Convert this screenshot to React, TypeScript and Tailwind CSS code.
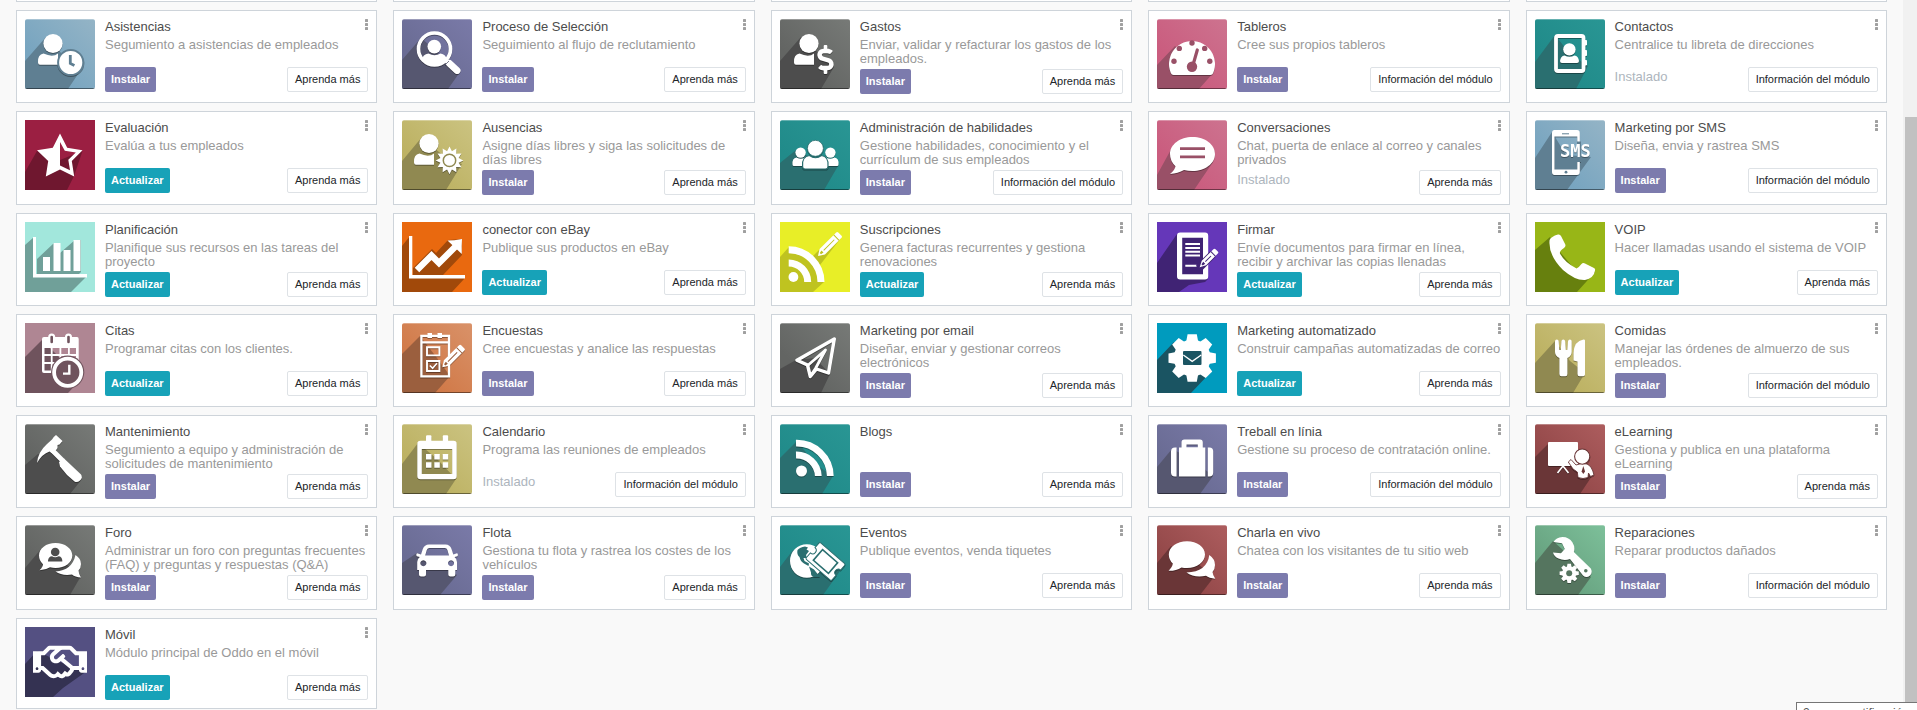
import type { ReactNode } from "react";
import { FaDollarSign, FaRegHandshake } from "react-icons/fa";

type Tone = { from: string; to: string; shade: string; flat?: boolean };

const TONES = {
  sky: { from: "#78a5c0", to: "#94b4c6", shade: "#5f7f92" },
  violet: { from: "#6a6c94", to: "#7a7aa8", shade: "#565770" },
  gray: { from: "#636563", to: "#777a77", shade: "#4d4d4d" },
  pink: { from: "#ca5d7f", to: "#cd738f", shade: "#995067" },
  teal: { from: "#218b8a", to: "#299694", shade: "#2a6f70" },
  sand: { from: "#bdb263", to: "#cbc381", shade: "#908951" },
  orange: { from: "#d17a49", to: "#d99269", shade: "#9b5f3e" },
  brick: { from: "#934849", to: "#ad5d5e", shade: "#6a3637" },
  green: { from: "#68a381", to: "#7dc09a", shade: "#55755f" },
  crimson: { from: "#9b1f42", to: "#9b1f42", shade: "#6f172f", flat: true },
  mint: { from: "#a2e7dc", to: "#a2e7dc", shade: "#70a099", flat: true },
  ebay: { from: "#e9690f", to: "#e9690f", shade: "#a1490a", flat: true },
  lemon: { from: "#e8ee27", to: "#e8ee27", shade: "#bfc320", flat: true },
  purple: { from: "#6537b9", to: "#6537b9", shade: "#402374", flat: true },
  lime: { from: "#98b617", to: "#98b617", shade: "#67800e", flat: true },
  mauve: { from: "#af8693", to: "#af8693", shade: "#6f535d", flat: true },
  cyan: { from: "#009bbe", to: "#009bbe", shade: "#1a5462", flat: true },
  indigo: { from: "#545082", to: "#545082", shade: "#343252", flat: true },
} satisfies Record<string, Tone>;

type Art = { tone: keyof typeof TONES; shadow: string; draw: (shade: string) => ReactNode };

/* Points of a star polygon: n spikes alternating between two radii. */
const spikes = (cx: number, cy: number, n: number, outer: number, inner: number) =>
  Array.from({ length: n * 2 }, (_, i) => {
    const r = i % 2 ? inner : outer;
    const a = (Math.PI * i) / n - Math.PI / 2;
    return `${(cx + r * Math.cos(a)).toFixed(2)},${(cy + r * Math.sin(a)).toFixed(2)}`;
  }).join(" ");

const Cog = ({ cx, cy, r, tooth, n }: { cx: number; cy: number; r: number; tooth: number; n: number }) => (
  <g>
    <circle cx={cx} cy={cy} r={r} />
    {Array.from({ length: n }, (_, i) => (
      <path
        key={i}
        transform={`rotate(${(360 / n) * i} ${cx} ${cy})`}
        d={`M${cx - r * 0.34} ${cy - r * 0.8}L${cx - r * 0.25} ${cy - r - tooth}H${cx + r * 0.25}L${cx + r * 0.34} ${cy - r * 0.8}Z`}
      />
    ))}
  </g>
);

const Pencil = ({ x, y, length, half, shade }: { x: number; y: number; length: number; half: number; shade: string }) => (
  <g transform={`translate(${x} ${y}) rotate(-45)`}>
    <path d={`M0 0L6 ${-half}H${length - 1.5}Q${length} ${-half} ${length} ${1.5 - half}V${half - 1.5}Q${length} ${half} ${length - 1.5} ${half}H6Z`} />
    <path d={`M${length - 5} ${-half}V${half}M8 0H${length - 8}`} stroke={shade} strokeWidth="1" fill="none" />
    <path d="M3.4 -0.9L6.4 -1.4V1.4L3.4 0.9Z" fill={shade} />
  </g>
);

const Person = ({ x, y }: { x: number; y: number }) => (
  <g transform={`translate(${x} ${y})`}>
    <circle cx="15" cy="9.5" r="9.6" />
    <path d="M0 28.5Q-.5 20.5 5.5 19.6Q15 24 20 19.4V30.8H2Q0 30.8 0 28.5Z" />
  </g>
);

const ARTS = {
  attendance: {
    tone: "sky",
    shadow: "M0 42L21 18L28 25L45 44L57 49L43 70H0Z",
    draw: (s) => (
      <>
        <Person x={13} y={15} />
        <circle cx="45.7" cy="43.5" r="12.6" fill="#fff" stroke={s} strokeWidth="2" />
        <path d="M45.3 36V44.4L49.4 46.6" fill="none" stroke={s} strokeWidth="2.8" />
      </>
    ),
  },
  recruitment: {
    tone: "violet",
    shadow: "M0 41L19 19L32 30L45 43L58 53L46 70H0Z",
    draw: (s) => (
      <>
        <circle cx="32.5" cy="30" r="16" fill="none" stroke="#fff" strokeWidth="3.6" />
        <path d="M43.5 41.5L46.5 44.5" stroke="#fff" strokeWidth="3.6" />
        <path d="M47.5 44.5L55 51.5" stroke="#fff" strokeWidth="7" strokeLinecap="round" />
        <circle cx="32.3" cy="27.6" r="6.8" />
        <path d="M20 41Q20.5 35.5 26.5 34.6Q32.5 38 38.5 34.6Q44 35.5 45 41Q39 46 32.5 46T20 41Z" />
        <path d="M43 46L47 42" stroke={s} strokeWidth="0.8" />
      </>
    ),
  },
  expenses: {
    tone: "gray",
    shadow: "M0 42L21 18L29 25L45 40L54 48L41 70H0Z",
    draw: () => (
      <>
        <Person x={14} y={15} />
        <FaDollarSign x="31" y="26" size={29} color="#fff" />
      </>
    ),
  },
  gauge: {
    tone: "pink",
    shadow: "M0 46L18 27L35 42L57 53L42 70H0Z",
    draw: (s) => (
      <>
        <path d="M16.5 56Q14.5 56 13.8 54A23 23 0 1 1 56.2 54Q55.5 56 53.5 56Z" />
        <g fill={s}>
          <circle cx="17" cy="42.3" r="2.7" />
          <circle cx="22.3" cy="29.4" r="2.7" />
          <circle cx="35" cy="24" r="2.7" />
          <circle cx="47.7" cy="29.4" r="2.7" />
          <circle cx="52.8" cy="42.3" r="2.7" />
          <circle cx="35" cy="47.7" r="5.2" />
        </g>
        <path d="M40.3 31L36 46" stroke={s} strokeWidth="3.2" strokeLinecap="round" />
      </>
    ),
  },
  contacts: {
    tone: "teal",
    shadow: "M0 43L20 16L35 35L53 47L41 70H0Z",
    draw: () => (
      <>
        <rect x="21" y="17" width="27.5" height="35" rx="2" fill="none" stroke="#fff" strokeWidth="3.8" />
        <path d="M49 21.5H51.5V26H49ZM49 31.5H51.5V36.5H49ZM49 41.5H51.5V46H49Z" stroke="#fff" strokeWidth="1" />
        <circle cx="34.4" cy="30.4" r="6.2" />
        <path d="M25 42Q25.5 37 29.5 36.4Q34.5 39 39.5 36.4Q43.5 37 44 42Q44 44 42 44H27Q25 44 25 42Z" />
      </>
    ),
  },
  star: {
    tone: "crimson",
    shadow: "M0 52L12 31L35 40L57.5 31L49 56L42 70H0Z",
    draw: () => (
      <path
        fillRule="evenodd"
        d="M35 13.5L42.2 27.8L57.5 30.3L46.8 41L49.2 56.5L35 49.5L20.8 56.5L23.2 41L12 30.3L27.8 27.8ZM35 22V45.5L45 50.3L43.3 39.8L50.8 32.5L39.8 30.8Z"
      />
    ),
  },
  leaves: {
    tone: "sand",
    shadow: "M0 41L20 17L27 24L47 40L60 44L44 70H0Z",
    draw: (s) => (
      <>
        <Person x={12} y={14} />
        <polygon points={spikes(47.5, 40.4, 12, 13.8, 9.4)} />
        <circle cx="47.5" cy="40.4" r="6.2" fill="none" stroke={s} strokeWidth="1.5" />
      </>
    ),
  },
  team: {
    tone: "teal",
    shadow: "M0 43L16 30L35 40L58 46L44 70H0Z",
    draw: (s) => (
      <>
        <circle cx="20.6" cy="32.6" r="5.2" />
        <circle cx="50.4" cy="32.6" r="5.2" />
        <path d="M12.5 44.5Q12 38 16.5 37.5Q21 40 25 37.5V46H14Q12.5 46 12.5 44.5ZM58.5 44.5Q59 38 54.5 37.5Q50 40 46 37.5V46H57Q58.5 46 58.5 44.5Z" />
        <path d="M22.6 46.5Q21.5 36.5 29.5 35.5Q35.5 40 41.5 35.5Q49 36.5 48 46.5Q48 49 45.5 49H25Q22.6 49 22.6 46.5Z" stroke={s} strokeWidth="1.2" />
        <circle cx="35.4" cy="28.3" r="8" stroke={s} strokeWidth="0.8" />
      </>
    ),
  },
  chat: {
    tone: "pink",
    shadow: "M0 55L17 24L35 34L56 42L37 70H0Z",
    draw: (s) => (
      <>
        <path d="M35.5 17C48 17 58 24.4 58 34S48 51 35.5 51Q31 51 27 50Q21 53.5 13 54Q18 50 18.5 46.3Q13 41 13 34C13 24.4 23 17 35.5 17Z" />
        <path d="M23 28.6H48M23 36.8H48" stroke={s} strokeWidth="2.8" />
      </>
    ),
  },
  sms: {
    tone: "sky",
    shadow: "M0 38L17 12L31 35L56 37L32 70H0Z",
    draw: (s) => (
      <>
        <path fillRule="evenodd" d="M19.5 10H42Q44.8 10 44.8 13V52Q44.8 55 42 55H19.5Q17 55 17 52V13Q17 10 19.5 10ZM19.5 16.5V49.5H42.3V16.5Z" />
        <path d="M42 21.5H46V42H42Z" fill={s} />
        <path d="M27 13.8H34" stroke={s} strokeWidth="1" />
        <circle cx="31" cy="52.2" r="1.4" fill={s} />
        <text x="25" y="37" className="text-[17px] font-bold [font-family:'DejaVu_Sans_Mono',monospace]">SMS</text>
      </>
    ),
  },
  bars: {
    tone: "mint",
    shadow: "M0 23L9 15V54H62L46 70H0ZM12 37L29 21H35V31L50 18H56V50L54 52H12Z",
    draw: () => <path d="M8 15H11V52H62V55.5H8ZM18 35H25V49H18ZM28.5 21H35.5V49H28.5ZM38.5 28H45.5V49H38.5ZM48.5 18H55.5V49H48.5Z" />,
  },
  growth: {
    tone: "ebay",
    shadow: "M0 24L8 14V56H63L50 70H0ZM46 18L34 31L30 27L11 46V53H41L60 33V17Z",
    draw: (s) => (
      <>
        <path d="M30 33L37 41L54 24" fill="none" stroke={s} strokeWidth="1" />
        <path d="M7 14H10.3V53H63V56.5H7Z" />
        <path d="M15 48L29.5 33.5L37 41L54 24" fill="none" stroke="#fff" strokeWidth="6.4" />
        <path d="M45.5 18.5Q52 18.5 60 17Q59.5 24 59.8 32Z" />
      </>
    ),
  },
  subscription: {
    tone: "lemon",
    shadow: "M0 35L9 25L30 40L44 60L33 70H0ZM56 11L32 35L40 43L61 16Z",
    draw: (s) => (
      <>
        <circle cx="13.4" cy="55" r="4.9" />
        <path d="M8.7 41A19 19 0 0 1 27.7 60M8.7 27.7A32.3 32.3 0 0 1 41 60" fill="none" stroke="#fff" strokeWidth="7" />
        <Pencil x={38} y={34} length={31} half={3.8} shade={s} />
      </>
    ),
  },
  sign: {
    tone: "purple",
    shadow: "M0 41L20 12L35 35L51 57L48 60L32 63L22 70H0Z",
    draw: (s) => (
      <>
        <rect x="22.6" y="13.2" width="26" height="41.6" rx="0.6" fill={s} stroke="#fff" strokeWidth="5.2" />
        <path d="M28.3 22H43M28.3 26H43M28.3 29.8H43M28.3 33.5H43M28.3 43.7H39.5" stroke="#fff" strokeWidth="2.1" />
        <path d="M42 46L56 32" stroke={s} strokeWidth="8" />
        <Pencil x={42.7} y={45.3} length={24} half={3.1} shade={s} />
      </>
    ),
  },
  phone: {
    tone: "lime",
    shadow: "M0 28L15 15L25 30L42 50L60 50L42 70H0Z",
    draw: () => (
      <path d="M14.6 18Q16 14.5 23 12.5Q25 12 26 14L30.3 22.5Q31 24.5 29 26Q25 28.5 24.8 31Q29 40 41.5 46.5Q43.5 46 46 42.5Q48 40.3 50 41.5L59 46Q60.5 47 60 48.5Q59 56 50 58Q40 58.5 28 48Q13 33 14.6 18Z" />
    ),
  },
  appointment: {
    tone: "mauve",
    shadow: "M0 34L17 17L35 35L58 54L43 70H0Z",
    draw: (s) => (
      <>
        <path
          fillRule="evenodd"
          d="M19 14H52Q53.7 14 53.7 16V50H19Q17 50 17 48V16Q17 14 19 14ZM19.5 25V31H25.8V25ZM27.6 25V31H34.5V25ZM36.3 25V31H43V25ZM44.8 25V31H51V25ZM19.5 33V39H25.8V33ZM27.6 33V39H34.5V33ZM36.3 33V39H43V33ZM44.8 33V39H51V33ZM19.5 41V47.5H25.8V41ZM27.6 41V47.5H34.5V41Z"
        />
        <path d="M26.7 14V18.5M43.5 14V18.5" stroke="#fff" strokeWidth="7" strokeLinecap="round" />
        <path d="M26.7 14V19M43.5 14V19" stroke={s} strokeWidth="2.6" strokeLinecap="round" />
        <circle cx="42.7" cy="49.2" r="16.6" fill={s} />
        <circle cx="42.7" cy="49.2" r="13.6" fill={s} stroke="#fff" strokeWidth="3.8" />
        <path d="M44.3 41.8V50.6H38" fill="none" stroke="#fff" strokeWidth="2.4" />
      </>
    ),
  },
  survey: {
    tone: "orange",
    shadow: "M0 31L18 13L35 35L48 53L33 70H0Z",
    draw: (s) => (
      <>
        <path d="M47 33V12.8H19.4V53.3H47V42M19.4 19.3H47" fill="none" stroke="#fff" strokeWidth="2.3" />
        <path d="M25.5 10H30V15H25.5ZM35.5 10H40V15H35.5Z" />
        <path d="M25 24.3H37.4V32.4H25ZM25 38H37.4V48H25Z" fill="none" stroke="#fff" strokeWidth="1.9" />
        <path d="M27.8 42.5L30.6 45.3L35 40.3" fill="none" stroke="#fff" strokeWidth="1.6" />
        <Pencil x={40.3} y={44.3} length={29} half={3.8} shade={s} />
      </>
    ),
  },
  mail: {
    tone: "gray",
    shadow: "M0 46L16 37L35 35L50 51L41 70H0Z",
    draw: () => (
      <g fill="none" stroke="#fff" strokeWidth="3.4" strokeLinejoin="round">
        <path d="M54.3 16L17 37.2L27.5 42L30.3 53.5L36.5 46L48.5 50Z" />
        <path d="M28 42.2L45.5 27L35.5 45.5L30.5 53" strokeWidth="2.8" />
      </g>
    ),
  },
  automation: {
    tone: "cyan",
    shadow: "M0 37L17 19L35 35L53 50L34 70H0Z",
    draw: (s) => (
      <>
        <Cog cx={35.2} cy={35} r={18.5} tooth={5.2} n={8} />
        <path d="M27 28H43.5Q44.5 28 44.5 29V41Q44.5 42 43.5 42H27Q26 42 26 41V29Q26 28 27 28Z" fill={s} />
        <path d="M26.3 32L35.2 38.4L44.2 32" fill="none" stroke="#fff" strokeWidth="1.3" />
      </>
    ),
  },
  lunch: {
    tone: "sand",
    shadow: "M0 40L20 18L35 38L50 50L38 70H0Z",
    draw: () => (
      <>
        <path d="M20 18.5Q20 16.5 21.8 16.5T23.7 18.5L24.3 27H25.8L26.4 18.5Q26.6 16.5 28.3 16.5T30.2 18.5L30.8 27H32.3L33 18.5Q33.2 16.5 34.9 16.5T36.7 18.5V29Q36.5 33 32.4 35V51Q32.4 53.3 30.4 53.3H26.4Q24.4 53.3 24.4 51V35Q20.2 33 20 29Z" />
        <path d="M50 17.5V51.5Q50 53.3 48 53.3H44.5Q42.5 53.3 42.5 51V38.5L38.5 37.5V30Q39 18 48.5 16.5Q50 16.4 50 17.5Z" />
      </>
    ),
  },
  hammer: {
    tone: "gray",
    shadow: "M0 41L13 30L25 27L45 45L57 55L45 70H0Z",
    draw: () => (
      <>
        <path d="M12 39Q13 28 22 20L27 15.5Q28.5 12.5 31 11L37.5 17L34.5 20.5L32.5 21Q33 24 31.5 25.5L27.5 29.5L24.5 27.5Q17 30 12 39Z" />
        <path d="M27 26L38 37" stroke="#fff" strokeWidth="5" />
        <path d="M34 38L39 34.5L56 50.5Q58 54 55 56.5Q52 59 49.5 57.5Q41 51 35 42.5Z" />
      </>
    ),
  },
  calendar: {
    tone: "sand",
    shadow: "M0 40L16 19L35 35L54 55L44 70H0Z",
    draw: () => (
      <>
        <path
          fillRule="evenodd"
          d="M18.5 16.7H51.5Q54.7 16.7 54.7 20V52Q54.7 55.3 51.5 55.3H18.5Q15.3 55.3 15.3 52V20Q15.3 16.7 18.5 16.7ZM19.8 25V50H50.2V25Z"
        />
        <path d="M24 12.5Q24 11.3 25.2 11.3H28.3Q29.5 11.3 29.5 12.5V18H24ZM40.7 12.5Q40.7 11.3 41.9 11.3H45Q46.2 11.3 46.2 12.5V18H40.7Z" />
        <path d="M24 30H29.5V35.5H24ZM32.3 30H37.8V35.5H32.3ZM40.7 30H46.2V35.5H40.7ZM24 38.3H29.5V43.8H24ZM32.3 38.3H37.8V43.8H32.3ZM40.7 38.3H46.2V43.8H40.7Z" />
      </>
    ),
  },
  blog: {
    tone: "teal",
    shadow: "M0 34L17 17L35 40L53 52L42 70H0Z",
    draw: () => (
      <>
        <circle cx="21.5" cy="47" r="5.5" />
        <path d="M16 31A21.8 21.8 0 0 1 38.3 52M16 19.2A33.5 33.5 0 0 1 50.3 52" fill="none" stroke="#fff" strokeWidth="6.8" />
      </>
    ),
  },
  jobs: {
    tone: "violet",
    shadow: "M0 43L15 25L35 35L56 52L43 70H0Z",
    draw: () => (
      <path
        fillRule="evenodd"
        d="M18 23.4H19.6V52.6H18Q14 52.6 14 48.6V27.4Q14 23.4 18 23.4ZM52.4 23.4H50.8V52.6H52.4Q56.2 52.6 56.2 48.6V27.4Q56.2 23.4 52.4 23.4ZM22 23.4H24.5V18.5Q24.5 15.6 27.4 15.6H43Q45.8 15.6 45.8 18.5V23.4H48.3V52.6H22ZM29.5 20.6V23.2H40.8V20.6Z"
      />
    ),
  },
  elearning: {
    tone: "brick",
    shadow: "M0 33L14 19L30 35L57 52L45 70H0Z",
    draw: (s) => (
      <>
        <rect x="13" y="18" width="30" height="24" rx="1" />
        <path d="M28 42L22.5 49M28 42L33.5 49" stroke="#fff" strokeWidth="1.6" />
        <path d="M33.3 38L36 35.5L41 41Q46 38.5 52 40Q57 42 59 51L55.5 52.5L53.5 49L53 53.5Q48 55.5 43 53.5L42.3 48L38 45Z" stroke={s} strokeWidth="0.9" />
        <circle cx="47.2" cy="32.6" r="7.6" stroke={s} strokeWidth="1.1" />
        <path d="M48.3 42L50 47.5L48.3 50L46.6 47.5Z" fill={s} />
      </>
    ),
  },
  forum: {
    tone: "gray",
    shadow: "M0 43L16 24L30 30L56 51L45 70H0Z",
    draw: (s) => (
      <>
        <path d="M50.5 30Q56 33.5 56 39Q56 43 53.5 45.5Q53.5 48.5 56 52.5Q50 52 47 49.5Q37 51 30.5 46.5Q47 45.5 50.5 30Z" />
        <path d="M30.5 18C40 18 47.3 23.5 47.3 30.5S40 43 30.5 43Q28 43 25 42.3Q21 45 14.5 45.3Q18 42 18 39.3Q14 35.5 14 30.5C14 23.5 21 18 30.5 18Z" />
        <circle cx="30.2" cy="27" r="4.3" fill={s} />
        <path d="M23 35.5Q23.5 31.5 27 31.3Q30.2 33 33.5 31.3Q37 31.5 37.3 35.5V36.6H23Z" fill={s} />
      </>
    ),
  },
  fleet: {
    tone: "violet",
    shadow: "M0 38L15 28L35 35L55 50L38 70H0Z",
    draw: () => (
      <path
        fillRule="evenodd"
        d="M27 19.5H43.5Q48 19.5 49.5 24L51.3 29.5L55 28.2Q56.5 29 55.5 31.2L52.5 32Q55 34 55 37V45H53.3V49.5Q53.3 51.6 51.2 51.6H48.3Q46.3 51.6 46.3 49.5V45H24V49.5Q24 51.6 22 51.6H19Q17 51.6 17 49.5V45H15.2V37Q15.2 34 17.8 32L14.7 31.2Q13.7 29 15.2 28.2L19 29.5L20.8 24Q22.5 19.5 27 19.5ZM27.5 23Q25.5 23 24.8 25L23.2 30.5H47L45.4 25Q44.8 23 42.8 23ZM21.3 35.3A3 3 0 1 0 21.4 35.3ZM49 35.3A3 3 0 1 0 49.1 35.3Z"
      />
    ),
  },
  events: {
    tone: "teal",
    shadow: "M0 42L13 25L30 36L60 46L43 70H0Z",
    draw: (s) => (
      <>
        <circle cx="26.8" cy="36" r="16.8" />
        <path d="M17.5 25Q20 22 25 21.5L28 22.5L26.5 24.5L29 26L26 30L27 33L23.5 33L24.5 36L29 38.5L28.5 41L24 38.5Q20.5 36.5 19.5 32Q16.5 29.5 17.5 25Z" fill={s} />
        <path d="M29 41.5L34 44.5L40 52H34Q30.5 51 31 47.5Z" fill={s} />
        <g transform="rotate(41 45.5 36.5)">
          <path
            d="M30 25.5H61Q62.5 25.5 62.5 27V33A3.5 3.5 0 0 0 62.5 40V46Q62.5 47.5 61 47.5H30Q28.5 47.5 28.5 46V40A3.5 3.5 0 0 0 28.5 33V27Q28.5 25.5 30 25.5Z"
            stroke={s}
            strokeWidth="1"
          />
          <rect x="35.5" y="29.5" width="20" height="14" fill="none" stroke={s} strokeWidth="1.6" />
        </g>
      </>
    ),
  },
  livechat: {
    tone: "brick",
    shadow: "M0 38L14 21L30 30L57 52L43 70H0Z",
    draw: () => (
      <>
        <path d="M52.3 30Q58 34 58 40Q58 44.5 55.5 47Q55.7 50 58.3 53.7Q52 53.3 49 50.8Q37 53 29.5 47.5Q50 47 52.3 30Z" />
        <path d="M30 16.3C40 16.3 48 22 48 29.6S40 43 30 43Q27 43 24.5 42.4Q19 46 11.6 45.8Q15.5 42 15.8 38.6Q11.8 35 11.8 29.6C11.8 22 20 16.3 30 16.3Z" />
      </>
    ),
  },
  repair: {
    tone: "green",
    shadow: "M0 38L18 16L28 25L56 52L43 70H0Z",
    draw: (s) => (
      <>
        <path d="M18.5 17Q21 12.5 27.5 12Q34 12 37.5 17.5Q40.5 22.5 38.8 27L55.8 43.5Q58 47.5 55 50.5Q51.5 53.5 48 50.5L35 34Q29 36 23.5 33.5Q19 31.5 18 27.5L26 28.3L29.8 24L27 18.3Z" />
        <circle cx="50.8" cy="45.8" r="1.8" fill={s} />
        <Cog cx={34.2} cy={48.3} r={7} tooth={2.6} n={8} />
        <circle cx="34.2" cy="48.3" r="3" fill={s} />
      </>
    ),
  },
  handshake: {
    tone: "indigo",
    shadow: "M0 37L12 24L35 35L62 44L38 61L28 70H0Z",
    draw: () => <FaRegHandshake x="8" y="8" size={54} color="#fff" />,
  },
} satisfies Record<string, Art>;

type ArtName = keyof typeof ARTS;

function AppIcon({ name }: { name: ArtName }) {
  const art: Art = ARTS[name];
  const tone: Tone = TONES[art.tone];
  const r = tone.flat ? 0 : 2.5;
  return (
    <svg viewBox="0 0 70 70" className="size-[70px] shrink-0" aria-hidden="true">
      <defs>
        <linearGradient id={`bg-${name}`} x1="0" y1="1" x2="1" y2="0">
          <stop offset="0.3" stopColor={tone.from} />
          <stop offset="1" stopColor={tone.to} />
        </linearGradient>
        <clipPath id={`clip-${name}`}>
          <rect width="70" height="70" rx={r} />
        </clipPath>
      </defs>
      <g clipPath={`url(#clip-${name})`}>
        <rect width="70" height="70" fill={`url(#bg-${name})`} />
        <path d={art.shadow} fill={tone.shade} />
        {!tone.flat && (
          <>
            <rect width="70" height="1" fill="#fff" opacity="0.3" />
            <rect y="69" width="70" height="1" fill="#000" opacity="0.45" />
          </>
        )}
        <g fill="#fff" className={tone.flat ? "" : "[filter:drop-shadow(0_1.4px_0_rgba(0,0,0,0.35))]"}>
          {art.draw(tone.shade)}
        </g>
      </g>
    </svg>
  );
}

type State = "install" | "upgrade" | "installed";
type Module = [icon: ArtName, title: string, summary: string, state: State, link: "more" | "info"];

const MODULES: Module[] = [
  ["attendance", "Asistencias", "Segumiento a asistencias de empleados", "install", "more"],
  ["recruitment", "Proceso de Selección", "Seguimiento al flujo de reclutamiento", "install", "more"],
  ["expenses", "Gastos", "Enviar, validar y refacturar los gastos de los empleados.", "install", "more"],
  ["gauge", "Tableros", "Cree sus propios tableros", "install", "info"],
  ["contacts", "Contactos", "Centralice tu libreta de direcciones", "installed", "info"],
  ["star", "Evaluación", "Evalúa a tus empleados", "upgrade", "more"],
  ["leaves", "Ausencias", "Asigne días libres y siga las solicitudes de días libres", "install", "more"],
  ["team", "Administración de habilidades", "Gestione habilidades, conocimiento y el currículum de sus empleados", "install", "info"],
  ["chat", "Conversaciones", "Chat, puerta de enlace al correo y canales privados", "installed", "more"],
  ["sms", "Marketing por SMS", "Diseña, envia y rastrea SMS", "install", "info"],
  ["bars", "Planificación", "Planifique sus recursos en las tareas del proyecto", "upgrade", "more"],
  ["growth", "conector con eBay", "Publique sus productos en eBay", "upgrade", "more"],
  ["subscription", "Suscripciones", "Genera facturas recurrentes y gestiona renovaciones", "upgrade", "more"],
  ["sign", "Firmar", "Envíe documentos para firmar en línea, recibir y archivar las copias llenadas", "upgrade", "more"],
  ["phone", "VOIP", "Hacer llamadas usando el sistema de VOIP", "upgrade", "more"],
  ["appointment", "Citas", "Programar citas con los clientes.", "upgrade", "more"],
  ["survey", "Encuestas", "Cree encuestas y analice las respuestas", "install", "more"],
  ["mail", "Marketing por email", "Diseñar, enviar y gestionar correos electrónicos", "install", "more"],
  ["automation", "Marketing automatizado", "Construir campañas automatizadas de correo", "upgrade", "more"],
  ["lunch", "Comidas", "Manejar las órdenes de almuerzo de sus empleados.", "install", "info"],
  ["hammer", "Mantenimiento", "Segumiento a equipo y administración de solicitudes de mantenimiento", "install", "more"],
  ["calendar", "Calendario", "Programa las reuniones de empleados", "installed", "info"],
  ["blog", "Blogs", "", "install", "more"],
  ["jobs", "Treball en línia", "Gestione su proceso de contratación online.", "install", "info"],
  ["elearning", "eLearning", "Gestiona y publica en una plataforma eLearning", "install", "more"],
  ["forum", "Foro", "Administrar un foro con preguntas frecuentes (FAQ) y preguntas y respuestas (Q&A)", "install", "more"],
  ["fleet", "Flota", "Gestiona tu flota y rastrea los costes de los vehículos", "install", "more"],
  ["events", "Eventos", "Publique eventos, venda tiquetes", "install", "more"],
  ["livechat", "Charla en vivo", "Chatea con los visitantes de tu sitio web", "install", "more"],
  ["repair", "Reparaciones", "Reparar productos dañados", "install", "info"],
  ["handshake", "Móvil", "Módulo principal de Oddo en el móvil", "upgrade", "more"],
];

function StateControl({ state }: { state: State }) {
  if (state === "installed") {
    return <span className="text-[13px] leading-5 text-[#adb5bd]">Instalado</span>;
  }
  return state === "install" ? (
    <button type="button" className="h-[25px] rounded-[2px] bg-[#7c7bad] px-1.5 text-[11px] font-bold text-white">
      Instalar
    </button>
  ) : (
    <button type="button" className="h-[25px] rounded-[2px] bg-[#17a2b8] px-1.5 text-[11px] font-bold text-white">
      Actualizar
    </button>
  );
}

function ModuleCard({ module: [icon, title, summary, state, link] }: { module: Module }) {
  return (
    <article className="relative flex gap-2.5 border border-[#ced4da] bg-white p-2">
      <AppIcon name={icon} />
      <div className="min-w-0 flex-1">
        <h2 className="mb-[3px] pr-4 text-[13px] leading-4 text-[#4c4c4c]">{title}</h2>
        <p className="mb-[3px] min-h-[26px] text-[13px] leading-[14px] text-[#999999]">{summary}</p>
        <div className="flex items-start justify-between">
          <StateControl state={state} />
          <a
            href="#"
            className="flex h-[25px] items-center rounded-[2px] border border-[#dee2e6] bg-white px-[7px] text-[11px] text-[#212529]"
          >
            {link === "more" ? "Aprenda más" : "Información del módulo"}
          </a>
        </div>
      </div>
      <button type="button" aria-label={`Opciones de ${title}`} className="absolute top-2 right-2 text-[#a0a0a0]">
        <svg viewBox="0 0 3 11" className="h-[11px] w-[3px]" fill="currentColor" aria-hidden="true">
          <rect width="3" height="3" rx="0.5" />
          <rect y="4" width="3" height="3" rx="0.5" />
          <rect y="8" width="3" height="3" rx="0.5" />
        </svg>
      </button>
    </article>
  );
}

export default function App() {
  return (
    <div className="relative flex h-screen overflow-hidden bg-[#f9f9f9] font-['Liberation_Sans',Arial,sans-serif]">
      <main className="min-w-0 flex-1 pr-4 pl-4">
        <div className="grid grid-cols-5 grid-rows-[2px_minmax(93px,auto)_minmax(94px,auto)_repeat(3,minmax(93px,auto))_minmax(94px,auto)_auto] gap-x-4 gap-y-2">
          {[0, 1, 2, 3, 4].map((column) => (
            <div key={column} className="border border-t-0 border-[#ced4da] bg-white" />
          ))}
          {MODULES.map((module) => (
            <ModuleCard key={module[0]} module={module} />
          ))}
        </div>
      </main>
      <div className="flex w-3.5 flex-col items-end bg-[#f1f1f1] pt-[117px]" aria-hidden="true">
        <div className="w-3 flex-1 bg-[#c1c1c1]" />
      </div>
      <div className="absolute right-0 bottom-0 h-2 w-[121px] overflow-hidden border-t border-l border-[#767676] bg-white pt-0.5 pl-1.5 text-xs whitespace-nowrap text-[#575757]">
        2 nueva notificación
      </div>
    </div>
  );
}
